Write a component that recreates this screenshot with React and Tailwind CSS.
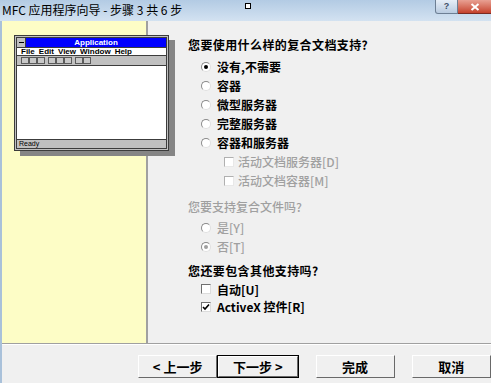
import React from 'react';

const cjk = "font-['Noto_Sans_CJK_SC','Noto_Sans',sans-serif]";

const Radio = ({ checked, disabled }) => (
  <span className="w-[10px] h-[10px] rounded-full border border-[#8a8a8a] border-r-[#e0e0e0] border-b-[#e0e0e0] bg-white flex items-center justify-center shrink-0">
    {checked && (
      <span className={`w-[4px] h-[4px] rounded-full ${disabled ? 'bg-[#a0a0a0]' : 'bg-black'}`} />
    )}
  </span>
);

const Check = ({ checked, disabled }) => (
  <span
    className={`w-[10px] h-[10px] border bg-white flex items-center justify-center shrink-0 ${
      disabled ? 'border-[#b0b0b0] border-r-[#e8e8e8] border-b-[#e8e8e8]' : 'border-[#707070] border-r-[#dcdcdc] border-b-[#dcdcdc]'
    }`}
  >
    {checked && (
      <svg width="8" height="8" viewBox="0 0 8 8">
        <path d="M1 4 L3 6 L7 1.5" fill="none" stroke="#000" strokeWidth="1.6" />
      </svg>
    )}
  </span>
);

const Option = ({ type, checked, disabled, children, indent, h = 'h-[19px]' }) => (
  <div className={`flex items-center ${h} ${indent ? 'pl-[76px]' : 'pl-[53px]'}`}>
    {type === 'radio' ? <Radio checked={checked} disabled={disabled} /> : <Check checked={checked} disabled={disabled} />}
    <span className={`${indent ? 'ml-[4px]' : 'ml-[6px]'} ${disabled ? 'text-[#a0a0a0] font-medium' : 'text-black font-bold'}`}>
      {children}
    </span>
  </div>
);

const Btn = ({ children, primary, className = '' }) => (
  <div className={`h-[23px] ${primary ? 'border border-black' : ''} ${className}`}>
    <div className="h-full flex items-center justify-center bg-[#f0f0f0] border border-white border-r-[#696969] border-b-[#696969] text-[13px] font-bold text-black">
      {children}
    </div>
  </div>
);

const MiniApp = () => (
  <div className="ml-[12px] mt-[14px] w-[155px] h-[116px] bg-[#c0c0c0] border border-[#3c3c3c] p-[1px] shadow-[6px_5px_0_#858585] font-['Liberation_Sans',sans-serif]">
    <div className="h-full flex flex-col border border-[#3c3c3c]">
      <div className="flex h-[9px]">
        <div className="w-[9px] h-[9px] bg-[#c0c0c0] border-r border-[#3c3c3c] flex items-center justify-center">
          <span className="w-[5px] h-[1px] bg-black" />
        </div>
        <div className="flex-1 bg-[#0000ff] text-white text-[8px] leading-[9px] font-bold text-center">Application</div>
      </div>
      <div className="h-[8px] bg-white border-t border-[#3c3c3c] text-[8px] leading-[7px] font-bold text-black flex gap-[4px] pl-[4px]">
        <span><u>F</u>ile</span>
        <span><u>E</u>dit</span>
        <span><u>V</u>iew</span>
        <span><u>W</u>indow</span>
        <span><u>H</u>elp</span>
      </div>
      <div className="h-[10px] bg-[#c0c0c0] border-t border-[#3c3c3c] flex items-center pl-[4px] gap-[3px]">
        {[3, 3, 2].map((n, i) => (
          <div key={i} className="flex">
            {Array.from({ length: n }).map((_, j) => (
              <span key={j} className="w-[8px] h-[7px] bg-[#c8c8c8] border border-[#5a5a5a]" />
            ))}
          </div>
        ))}
      </div>
      <div className="flex-1 bg-white border-t border-[#3c3c3c]" />
      <div className="h-[9px] bg-[#c0c0c0] border-t border-[#3c3c3c] text-[7px] leading-[8px] text-black pl-[2px]">Ready</div>
    </div>
  </div>
);

export default function App() {
  return (
    <div className={`w-[491px] h-[383px] overflow-hidden flex flex-col bg-[#f0f0f0] ${cjk}`}>
      {/* title bar */}
      <div className="h-[21px] shrink-0 flex items-start bg-gradient-to-b from-[#b3cbe4] to-[#d3e2f1] relative">
        <span className="pl-[2px] pt-[2px] text-[12px] leading-[16px] text-black">MFC 应用程序向导 - 步骤 3 共 6 步</span>
        <span className="absolute left-[245px] top-[3px] w-[6px] h-[6px] bg-white border border-black" />
        <div className="ml-auto flex">
          <div className="w-[23px] h-[14px] rounded-bl-[3px] border border-[#6d7f94] border-t-0 bg-gradient-to-b from-[#e6eef7] to-[#b9cbe0] flex items-center justify-center text-[9px] leading-none font-bold text-[#3d4f66] font-['Liberation_Sans',sans-serif]">?</div>
          <div className="w-[33px] h-[14px] border-b border-[#7a2a22] bg-gradient-to-b from-[#e8a093] to-[#c4402c] flex items-center justify-center">
            <svg width="10" height="8" viewBox="0 0 10 8">
              <path d="M1.5 1 L8.5 7 M8.5 1 L1.5 7" stroke="#fff" strokeWidth="2" />
            </svg>
          </div>
        </div>
      </div>

      {/* body */}
      <div className="flex-1 flex flex-col border-l-2 border-[#a9c1da]">
        <div className="h-[323px] flex border-b border-[#a0a0a0]">
          <div className="w-[146px] bg-[#fdfdc6] border-r-2 border-[#a0a0a0]">
            <MiniApp />
          </div>
          <div className="flex-1 pt-[14px] text-[12px] leading-[19px]">
            <div className="pl-[40px] font-bold text-black tracking-[0.4px]">您要使用什么样的复合文档支持?</div>
            <div className="mt-[3px]">
              <Option type="radio" checked>没有,不需要</Option>
              <Option type="radio">容器</Option>
              <Option type="radio">微型服务器</Option>
              <Option type="radio">完整服务器</Option>
              <Option type="radio">容器和服务器</Option>
              <Option type="check" indent disabled>活动文档服务器[D]</Option>
              <Option type="check" indent disabled>活动文档容器[M]</Option>
            </div>
            <div className="pl-[40px] mt-[7px] font-medium text-[#a0a0a0]">您要支持复合文件吗?</div>
            <div className="mt-[2px]">
              <Option type="radio" disabled>是[Y]</Option>
              <Option type="radio" checked disabled>否[T]</Option>
            </div>
            <div className="pl-[40px] mt-[5px] font-bold text-black tracking-[0.4px]">您还要包含其他支持吗?</div>
            <div>
              <Option type="check" h="h-[18px]">自动[U]</Option>
              <Option type="check" checked h="h-[17px]">ActiveX 控件[R]</Option>
            </div>
          </div>
        </div>

        <div className="flex-1 border-t border-white flex items-start pt-[10px] pl-[136px]">
          <Btn className="w-[80px]">&lt; 上一步</Btn>
          <Btn primary className="w-[82px]">下一步 &gt;</Btn>
          <Btn className="w-[80px] ml-[17px]">完成</Btn>
          <Btn className="w-[80px] ml-[17px]">取消</Btn>
        </div>
      </div>
    </div>
  );
}
